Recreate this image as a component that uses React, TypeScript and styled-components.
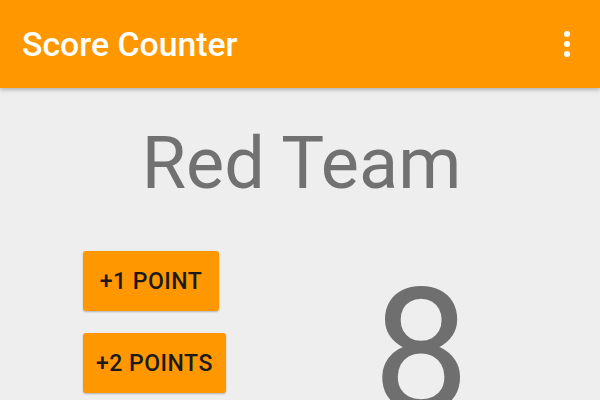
import React from "react";
import styled, { createGlobalStyle } from "styled-components";

const Global = createGlobalStyle`
  html, body { margin: 0; padding: 0; width: 600px; height: 400px; overflow: hidden; background: #eeeeee; }
  body { font-family: Roboto, "Noto Sans", sans-serif; }
`;

const Page = styled.div`
  width: 600px;
  height: 400px;
  overflow: hidden;
  background: #eeeeee;
  display: flex;
  flex-direction: column;
`;

const AppBar = styled.header`
  height: 88px;
  flex: none;
  background: #ff9800;
  display: flex;
  align-items: center;
  justify-content: space-between;
  padding: 0 28px 0 22px;
  box-sizing: border-box;
  box-shadow: 0 2px 4px rgba(0, 0, 0, 0.25);
  position: relative;
  z-index: 1;
`;

const Title = styled.h1`
  margin: 0;
  font-family: Roboto, sans-serif;
  font-weight: 500;
  font-size: 33.8px;
  color: #ffffff;
  letter-spacing: 0;
`;

const MenuButton = styled.button`
  border: none;
  background: none;
  padding: 0;
  width: 10px;
  display: flex;
  flex-direction: column;
  align-items: center;
  gap: 3.5px;
`;

const Dot = styled.span`
  width: 6.5px;
  height: 6.5px;
  border-radius: 50%;
  background: #ffffff;
`;

const Content = styled.main`
  display: flex;
  flex-direction: column;
  align-items: center;
`;

const TeamName = styled.h2`
  margin: 32px 0 0 0;
  font-family: Roboto, sans-serif;
  font-weight: 400;
  font-size: 72px;
  line-height: 88px;
  color: #717171;
  padding-left: 3px;
`;

const Row = styled.div`
  align-self: stretch;
  display: flex;
  margin-top: 43px;
`;

const ButtonColumn = styled.div`
  width: 143px;
  display: flex;
  flex-direction: column;
  align-items: flex-start;
  gap: 22px;
  margin-left: 83px;
`;

const ActionButton = styled.button`
  height: 60px;
  min-width: 136px;
  padding: 0 13px;
  border: none;
  border-radius: 3px;
  background: #ff9800;
  color: #1a1a1a;
  font-family: Roboto, sans-serif;
  font-weight: 500;
  font-size: 23px;
  letter-spacing: 0.5px;
  white-space: nowrap;
  box-shadow: 0 1px 2px rgba(0, 0, 0, 0.25);
`;

const Score = styled.div`
  flex: 1;
  text-align: center;
  padding-left: 16px;
  font-family: Roboto, sans-serif;
  font-weight: 400;
  font-size: 172px;
  line-height: 1;
  color: #6f6f6f;
  margin-top: 14px;
`;

export default function App() {
  return (
    <Page>
      <Global />
      <AppBar>
        <Title>Score Counter</Title>
        <MenuButton aria-label="More options">
          <Dot />
          <Dot />
          <Dot />
        </MenuButton>
      </AppBar>
      <Content>
        <TeamName>Red Team</TeamName>
        <Row>
          <ButtonColumn>
            <ActionButton>+1 POINT</ActionButton>
            <ActionButton>+2 POINTS</ActionButton>
          </ButtonColumn>
          <Score>8</Score>
        </Row>
      </Content>
    </Page>
  );
}
